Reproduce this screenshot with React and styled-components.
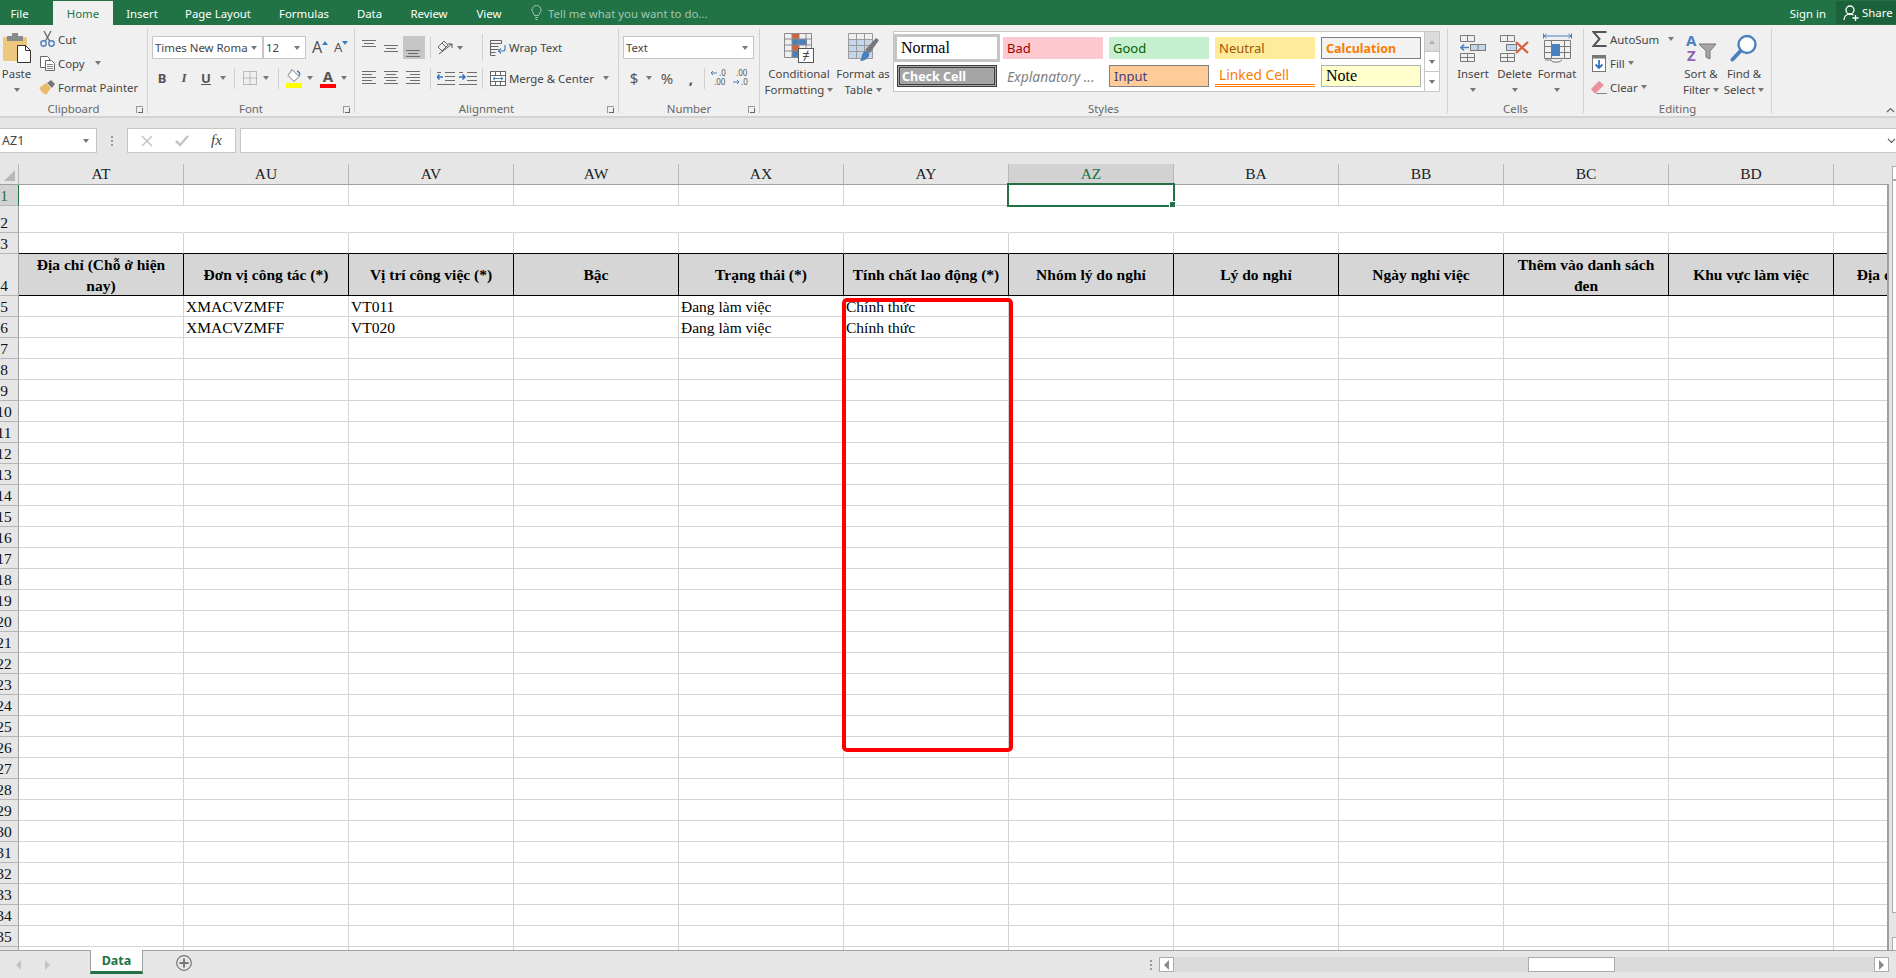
import React from 'react';
import styled, { createGlobalStyle } from 'styled-components';

const UI_FONT = '"Noto Sans", "Open Sans", sans-serif';
const CELL_FONT = '"Liberation Serif", "Times New Roman", serif';

const GlobalStyle = createGlobalStyle`
  html, body { margin: 0; height: 100%; overflow: hidden; background: #e6e6e6; }
  body { font-family: ${UI_FONT}; color: #444; }
  * { box-sizing: border-box; }
  svg { display: block; flex: none; }
`;

const Page = styled.div`
  width: 1896px;
  height: 978px;
  display: flex;
  flex-direction: column;
  overflow: hidden;
`;

/* title bar */
const TitleBar = styled.div`
  height: 25px;
  flex: none;
  background: #217346;
  padding-top: 1px;
  display: flex;
  align-items: stretch;
  color: #fff;
  font-size: 11.4px;
`;

const Tab = styled.div`
  width: ${(p) => p.$w}px;
  margin-right: ${(p) => p.$mr || 0}px;
  display: flex;
  align-items: center;
  justify-content: center;
  background: ${(p) => (p.$active ? '#f0f0f0' : 'transparent')};
  color: ${(p) => (p.$active ? '#217346' : '#fff')};
`;

const TellMe = styled.div`
  margin-left: 15px;
  display: flex;
  align-items: center;
  gap: 6px;
  color: #a3c7b3;
  flex: 1;
`;

const SignIn = styled.div`
  display: flex;
  align-items: center;
  margin-right: 10px;
`;

const ShareBox = styled.div`
  width: 60px;
  margin-bottom: 1px;
  background: #1b6139;
  display: flex;
  align-items: center;
  gap: 2px;
  padding-left: 7px;
`;

/* ribbon */
const Ribbon = styled.div`
  height: 93px;
  flex: none;
  display: flex;
  padding-top: 4px;
  background: #f0f0f0;
  border-bottom: 2px solid #d4d4d4;
  font-size: 11.4px;
  position: relative;
`;

const Group = styled.div`
  width: ${(p) => p.$w}px;
  height: 84px;
  flex: none;
  border-right: 1px solid #d2d2d2;
  display: flex;
  flex-direction: column;
`;

const GroupBody = styled.div`
  height: 74px;
  display: flex;
  padding-left: ${(p) => p.$pl || 0}px;
`;

const GroupLabel = styled.div`
  height: 10px;
  line-height: 12px;
  font-size: 11.4px;
  color: #666;
  text-align: center;
  position: relative;
`;

const Launcher = styled.span`
  position: absolute;
  right: 4px;
  top: 3px;
  width: 7px;
  height: 7px;
  border-left: 1px solid #999;
  border-top: 1px solid #999;
  &::after {
    content: '';
    position: absolute;
    right: 0;
    bottom: 0;
    width: 4px;
    height: 4px;
    border-right: 1px solid #666;
    border-bottom: 1px solid #666;
  }
`;

const BigButton = styled.div`
  width: ${(p) => p.$w}px;
  flex: none;
  padding-top: 4px;
  display: flex;
  flex-direction: column;
  align-items: center;
`;

const BigIcon = styled.div`
  height: 30px;
  margin-bottom: 3px;
  display: flex;
  align-items: center;
`;

const BigText = styled.div`
  line-height: 16px;
  height: 16px;
  white-space: nowrap;
  display: flex;
  align-items: center;
  gap: 3px;
`;

const SmallCol = styled.div`
  width: ${(p) => p.$w}px;
  flex: none;
  display: flex;
  flex-direction: column;
  gap: 4px;
  padding-left: ${(p) => p.$pl || 0}px;
`;

const SmallRow = styled.div`
  height: 20px;
  display: flex;
  align-items: center;
  white-space: nowrap;
`;

const SmallIcon = styled.span`
  width: 16px;
  margin-right: 3px;
  display: flex;
  justify-content: center;
`;

const Caret = styled.span`
  flex: none;
  display: inline-block;
  width: 0;
  height: 0;
  border-left: 3px solid transparent;
  border-right: 3px solid transparent;
  border-${(p) => (p.$up ? 'bottom' : 'top')}: 4px solid ${(p) => (p.$up ? '#b0b0b0' : '#777')};
  margin-left: ${(p) => p.$ml || 0}px;
`;

const Rows = styled.div`
  padding-top: 7px;
  display: flex;
  flex-direction: column;
  gap: 9px;
`;

const ToolRow = styled.div`
  height: ${(p) => p.$h || 20}px;
  display: flex;
  align-items: center;
  padding-left: ${(p) => p.$pl || 0}px;
`;

const Tool = styled.span`
  width: ${(p) => p.$w || 22}px;
  height: ${(p) => (p.$selected ? '23px' : 'auto')};
  margin-left: ${(p) => p.$ml || 0}px;
  flex: none;
  display: flex;
  align-items: center;
  justify-content: center;
  background: ${(p) => (p.$selected ? '#c6c6c6' : 'transparent')};
  color: #555;
  font-size: ${(p) => p.$fs || 13}px;
  font-weight: ${(p) => (p.$bold ? 700 : 400)};
  font-style: ${(p) => (p.$italic ? 'italic' : 'normal')};
  text-decoration: ${(p) => (p.$under ? 'underline' : 'none')};
  font-family: ${(p) => (p.$serif ? CELL_FONT : UI_FONT)};
`;

const CaretBox = styled.span`
  width: ${(p) => p.$w || 12}px;
  flex: none;
  display: flex;
  justify-content: center;
`;

const Sep = styled.span`
  width: 1px;
  height: ${(p) => p.$h || 21}px;
  margin-left: ${(p) => p.$ml || 0}px;
  flex: none;
  background: #cfcfcf;
`;

const Combo = styled.div`
  width: ${(p) => p.$w}px;
  height: 23px;
  flex: none;
  margin-left: ${(p) => p.$ml || 0}px;
  background: #fff;
  border: 1px solid #c6c6c6;
  display: flex;
  align-items: center;
  justify-content: space-between;
  padding: 0 5px 0 2px;
  color: #444;
  white-space: nowrap;
  overflow: hidden;
`;

const GrowA = styled.span`
  position: relative;
  width: ${(p) => p.$w}px;
  margin-left: ${(p) => p.$ml}px;
  flex: none;
  font-size: ${(p) => p.$fs}px;
  line-height: 23px;
  color: #555;
  &::after {
    content: '';
    position: absolute;
    right: 0;
    top: 5px;
    border-left: 3px solid transparent;
    border-right: 3px solid transparent;
    ${(p) => (p.$down ? 'border-top: 4px solid #3f7cbf;' : 'border-bottom: 4px solid #3f7cbf;')}
  }
`;

const ColourA = styled.span`
  width: 16px;
  display: flex;
  flex-direction: column;
  align-items: center;
  font-size: 15px;
  font-weight: 700;
  line-height: 15px;
  color: #555;
  &::after {
    content: '';
    width: 16px;
    height: 4px;
    background: ${(p) => p.$bar};
  }
`;

const ToolText = styled.span`
  margin-left: ${(p) => p.$ml || 0}px;
  white-space: nowrap;
`;

/* styles gallery */
const Gallery = styled.div`
  width: 547px;
  height: 61px;
  margin: 2px 0 0 3px;
  background: #fff;
  border: 1px solid #c6c6c6;
  display: flex;
  justify-content: space-between;
  flex: none;
`;

const StyleGrid = styled.div`
  padding: 5px 0 0 3px;
  display: grid;
  grid-template-columns: repeat(5, 100px);
  grid-auto-rows: 22px;
  gap: 6px;
`;

const styleKinds = {
  normal: 'background:#fff;color:#000;font-family:' + CELL_FONT + ';font-size:16px;box-shadow:0 0 0 3px #c6c6c6;',
  bad: 'background:#ffc7ce;color:#9c0006;',
  good: 'background:#c6efce;color:#006100;',
  neutral: 'background:#ffeb9c;color:#9c5700;',
  calc: 'background:#f2f2f2;color:#fa7d00;font-weight:700;font-size:12.5px;border:1px solid #7f7f7f;',
  check: 'background:#a5a5a5;color:#fff;font-weight:700;font-size:12.5px;border:3px double #3f3f3f;padding-left:2px;',
  explain: 'background:#fff;color:#7f7f7f;font-style:italic;font-size:13.8px;',
  input: 'background:#fc9;color:#3f3f76;border:1px solid #7f7f7f;',
  linked: 'background:#fff;color:#fa7d00;font-size:13.8px;border-bottom:3px double #ff8001;',
  note: 'background:#ffc;color:#000;border:1px solid #b2b2b2;font-family:' + CELL_FONT + ';font-size:16px;',
};

const StyleCell = styled.div`
  display: flex;
  align-items: center;
  padding-left: 4px;
  font-size: 13px;
  white-space: nowrap;
  overflow: hidden;
  ${(p) => styleKinds[p.$kind]}
`;

const GalleryScroll = styled.div`
  width: 15px;
  border-left: 1px solid #c6c6c6;
  display: flex;
  flex-direction: column;
`;

const ScrollStep = styled.div`
  flex: 1;
  display: flex;
  align-items: center;
  justify-content: center;
  background: ${(p) => (p.$off ? '#dcdcdc' : '#fff')};
  & + & { border-top: 1px solid #c6c6c6; }
`;

const ChevronUp = styled.svg`
  position: absolute;
  right: 1px;
  bottom: 3px;
`;

/* formula bar */
const FormulaBar = styled.div`
  height: 46px;
  flex: none;
  padding-top: 10px;
  display: flex;
  align-items: flex-start;
  background: #e6e6e6;
`;

const NameBox = styled.div`
  width: 97px;
  height: 25px;
  background: #fff;
  border: 1px solid #c6c6c6;
  border-left: 0;
  display: flex;
  align-items: center;
  justify-content: space-between;
  padding: 0 7px 0 2px;
  font-size: 12.5px;
`;

const Dots = styled.div`
  width: 30px;
  height: 25px;
  display: flex;
  flex-direction: column;
  align-items: center;
  justify-content: center;
  gap: 2px;
  & > i { width: 2px; height: 2px; background: #9a9a9a; }
`;

const FuncBox = styled.div`
  width: 109px;
  height: 25px;
  background: #fff;
  border: 1px solid #c6c6c6;
  display: flex;
  align-items: center;
  justify-content: space-around;
  padding: 0 2px;
`;

const Fx = styled.span`
  font-family: ${CELL_FONT};
  font-style: italic;
  font-size: 15px;
  color: #444;
`;

const FormulaInput = styled.div`
  flex: 1;
  height: 25px;
  margin-left: 4px;
  background: #fff;
  border: 1px solid #c6c6c6;
  border-right: 0;
  display: flex;
  align-items: center;
  justify-content: flex-end;
`;

/* sheet */
const SheetArea = styled.div`
  flex: 1;
  min-height: 0;
  display: flex;
  position: relative;
  background: #e6e6e6;
`;

const Grid = styled.div`
  width: 1889px;
  flex: none;
  overflow: hidden;
  font-family: ${CELL_FONT};
  font-size: 15.5px;
  color: #000;
`;

const GridBody = styled.div`
  background: #fff;
  border-right: 2px solid #9f9f9f;
  overflow: hidden;
`;

const Row = styled.div`
  height: ${(p) => p.$h}px;
  display: flex;
  width: 2100px;
`;

const Corner = styled.div`
  width: 19px;
  flex: none;
  background: #e6e6e6;
  border-right: 1px solid #b5b5b5;
  border-bottom: 1px solid #9f9f9f;
  display: flex;
  justify-content: flex-end;
  align-items: flex-end;
  padding: 0 3px 3px 0;
  &::after {
    content: '';
    border-left: 11px solid transparent;
    border-bottom: 11px solid #b9b9b9;
  }
`;

const ColHead = styled.div`
  width: 165px;
  flex: none;
  display: flex;
  align-items: center;
  justify-content: center;
  background: ${(p) => (p.$active ? '#d2d2d2' : '#e6e6e6')};
  color: ${(p) => (p.$active ? '#217346' : '#222')};
  border-right: 1px solid #b9b9b9;
  border-bottom: 1px solid #9f9f9f;
`;

const RowHead = styled.div`
  width: 19px;
  flex: none;
  overflow: hidden;
  display: flex;
  align-items: flex-end;
  background: ${(p) => (p.$active ? '#d2d2d2' : '#e6e6e6')};
  color: ${(p) => (p.$active ? '#217346' : '#111')};
  border-right: 1px solid ${(p) => (p.$active ? '#217346' : '#9f9f9f')};
  border-bottom: 1px solid #b5b5b5;
  line-height: 18px;
`;

const RowNumber = styled.span`
  width: 8px;
  display: flex;
  justify-content: center;
`;

const Cell = styled.div`
  width: 165px;
  flex: none;
  display: flex;
  align-items: flex-end;
  padding-left: 2px;
  line-height: 18px;
  white-space: nowrap;
  border-right: 1px solid ${(p) => (p.$merged ? 'transparent' : '#d4d4d4')};
  border-bottom: 1px solid ${(p) => (p.$dark ? '#000' : '#d4d4d4')};
`;

const HeadCell = styled.div`
  width: 165px;
  flex: none;
  display: flex;
  align-items: center;
  justify-content: center;
  text-align: center;
  line-height: 21px;
  font-weight: 700;
  background: #d6d6d6;
  padding: 0 8px;
  border-right: 1px solid #000;
  border-bottom: 1px solid #000;
`;

const CellSelection = styled.div`
  position: absolute;
  left: 1007px;
  top: 19px;
  width: 168px;
  height: 24px;
  border: 2px solid #217346;
  &::after {
    content: '';
    position: absolute;
    right: -3px;
    bottom: -3px;
    width: 5px;
    height: 5px;
    background: #217346;
    border: 1px solid #fff;
  }
`;

const RedBox = styled.div`
  position: absolute;
  left: 842px;
  top: 134px;
  width: 171px;
  height: 454px;
  border: 4px solid #ff0000;
  border-radius: 5px;
  pointer-events: none;
`;

const VScroll = styled.div`
  flex: 1;
  padding: 2px 0 0 3px;
  display: flex;
  flex-direction: column;
`;

const VPiece = styled.div`
  height: ${(p) => p.$h}px;
  margin-top: ${(p) => p.$mt || 0}px;
  background: #fff;
  border-left: 1px solid #ababab;
  border-top: 1px solid #ababab;
  border-bottom: 1px solid #ababab;
  flex: none;
`;

/* sheet tabs */
const TabBar = styled.div`
  height: 28px;
  flex: none;
  background: #e6e6e6;
  border-top: 1px solid #a0a0a0;
  display: flex;
  position: relative;
`;

const NavArrows = styled.div`
  width: 90px;
  display: flex;
  align-items: center;
  justify-content: flex-start;
  gap: 24px;
  padding: 0 0 0 16px;
`;

const NavArrow = styled.span`
  border-top: 5px solid transparent;
  border-bottom: 5px solid transparent;
  ${(p) => (p.$right ? `border-left: 5px solid ${p.$dark ? '#8a8a8a' : '#c4c4c4'};` : `border-right: 5px solid ${p.$dark ? '#8a8a8a' : '#c4c4c4'};`)}
`;

const SheetTab = styled.div`
  width: 53px;
  height: 24px;
  margin-top: -1px;
  background: #fff;
  border-left: 1px solid #a0a0a0;
  border-right: 1px solid #a0a0a0;
  border-bottom: 3px solid #217346;
  color: #217346;
  font-size: 12.5px;
  font-weight: 700;
  display: flex;
  align-items: center;
  justify-content: center;
`;

const AddSheet = styled.div`
  margin: 4px 0 0 33px;
`;

const ScrollZone = styled.div`
  margin-left: auto;
  padding: 6px 7px 0 0;
  display: flex;
`;

const ZoneDots = styled(Dots)`
  width: 16px;
  height: 15px;
`;

const HTrack = styled.div`
  width: 730px;
  height: 15px;
  background: #dadada;
  display: flex;
  align-items: stretch;
  justify-content: space-between;
  position: relative;
`;

const HButton = styled.div`
  width: 15px;
  background: #fff;
  border: 1px solid #ababab;
  display: flex;
  align-items: center;
  justify-content: center;
`;

const HThumb = styled.div`
  position: absolute;
  left: 369px;
  top: 0;
  width: 87px;
  height: 15px;
  background: #fff;
  border: 1px solid #ababab;
`;

/* icons */
const G = '#7a7a7a';
const B = '#4a80bd';

const Bulb = () => (
  <svg width="11" height="16" viewBox="0 0 11 16" fill="none" stroke="#a3c7b3" strokeWidth="1">
    <path d="M3.500 10.500C3 8.500 1 7.500 1 5a4.500 4.500 0 0 1 9 0c0 2.500-2 3.500-2.500 5.500z" />
    <path d="M4 12.500h3M4.500 14.500h2" />
  </svg>
);

const Person = () => (
  <svg width="17" height="18" viewBox="0 0 17 18" fill="none" stroke="#fff" strokeWidth="1.300">
    <circle cx="7" cy="6" r="4" />
    <path d="M1 16c0-3.500 2.500-6 6-6 1.500 0 2.500.5 3.500 1M12.500 11v6M9.500 14h6" />
  </svg>
);

const PasteIcon = () => (
  <svg width="28" height="30" viewBox="0 0 28 30">
    <rect x="0" y="4" width="24" height="24" rx="1" fill="#edc77d" />
    <path d="M4 3h5V0h6v3h5v5H4z" fill="#8a8a8a" />
    <path d="M14.500 12.500h8l5 5v12h-13z" fill="#fff" stroke="#333" />
    <path d="M22.500 12.500v5h5" fill="none" stroke="#333" />
  </svg>
);

const CutIcon = () => (
  <svg width="15" height="16" viewBox="0 0 15 16" fill="none">
    <path d="M4 0l5.500 10M11 0L5.500 10" stroke="#666" strokeWidth="1.300" />
    <circle cx="3.500" cy="12.500" r="2.700" stroke={B} strokeWidth="1.400" />
    <circle cx="11.500" cy="12.500" r="2.700" stroke={B} strokeWidth="1.400" />
  </svg>
);

const CopyIcon = () => (
  <svg width="15" height="15" viewBox="0 0 15 15" fill="#fff" stroke="#666">
    <path d="M.5.500h7l2 2v9h-9z" />
    <path d="M5.500 4.500h6l3 3v7h-9z" />
    <path d="M7 8.500h6M7 10.500h6M7 12.500h6" strokeWidth=".8" />
  </svg>
);

const PainterIcon = () => (
  <svg width="17" height="15" viewBox="0 0 17 15">
    <path d="M0 8l7-5 5 5-5 7-2-2-1 1-1-3-2 1 1-2z" fill="#e7b96a" />
    <path d="M8 3l4-3 4 4-3 4z" fill="#777" />
  </svg>
);

const BorderIcon = () => (
  <svg width="14" height="14" viewBox="0 0 14 14" fill="none" stroke="#8a8a8a" strokeDasharray="1 1">
    <path d="M.5.500h13v13H.5zM7 .5v13M.5 7h13" />
  </svg>
);

const BucketIcon = () => (
  <svg width="17" height="20" viewBox="0 0 17 20">
    <path d="M6 1.500l7 7-5 5-6-6z" fill="#fff" stroke="#777" />
    <path d="M13 8c1.500-2 .5-4-2-5" fill="none" stroke={B} strokeWidth="1.500" />
    <rect x="0" y="15" width="16" height="5" fill="#ffff00" />
  </svg>
);

const LinesIcon = ({ lines }) => (
  <svg width="16" height="20" viewBox="0 0 16 20" stroke="#6e6e6e">
    {lines.map(([x1, x2, y]) => (
      <line key={y} x1={x1} x2={x2} y1={y + 0.5} y2={y + 0.5} />
    ))}
  </svg>
);

const OrientIcon = () => (
  <svg width="17" height="17" viewBox="0 0 17 17" fill="none" stroke="#666">
    <path d="M1 8l6-6 4 4-6 6zM5 4l4 4" />
    <path d="M2 15L15 5" stroke="#555" />
    <path d="M11 5h4v4" stroke="#555" />
  </svg>
);

const WrapIcon = () => (
  <svg width="16" height="16" viewBox="0 0 16 16" fill="none">
    <path d="M.5.500h11v3H.5zM.5 6.500h8M.5 9.500h8M.5 12.500h5M.5 15.500h5" stroke="#666" />
    <path d="M.5.500v15" stroke="#666" />
    <path d="M15 5v4c0 1.500-1 2-2 2H9" stroke={B} strokeWidth="1.200" fill="none" />
    <path d="M11 8.500L8.500 11l2.500 2.500" stroke={B} strokeWidth="1.200" fill="none" />
  </svg>
);

const MergeIcon = () => (
  <svg width="16" height="15" viewBox="0 0 16 15" fill="#fff" stroke="#666">
    <rect x=".5" y=".5" width="15" height="14" />
    <path d="M.5 4.500h15M.5 10.500h15M5.500.500v4M10.500.500v4M5.500 10.500v4M10.500 10.500v4" />
    <path d="M3 7.500h10M5 5.800L3 7.500l2 1.700M11 5.800l2 1.700-2 1.700" stroke={B} fill="none" />
  </svg>
);

const IndentIcon = ({ inc }) => (
  <svg width="18" height="15" viewBox="0 0 18 15" stroke="#6e6e6e" fill="none">
    <path d="M8 1.500h10M8 5.500h10M8 9.500h10M0 13.500h18M0 1.500h4" />
    <path d={inc ? 'M0 6h6M3.500 3.500L6 6 3.500 8.500' : 'M6 6H0M2.500 3.500L0 6l2.500 2.500'} stroke="#2f74bd" strokeWidth="1.500" />
  </svg>
);

const DecimalIcon = ({ inc }) => (
  <svg width="16" height="18" viewBox="0 0 16 18" fontFamily={UI_FONT} fontSize="8" fill="#555">
    {inc ? (
      <>
        <text x="3" y="7">.00</text>
        <text x="8" y="16">.0</text>
        <path d="M0 13h6M4 11l2 2-2 2" stroke={B} fill="none" />
      </>
    ) : (
      <>
        <text x="8" y="7">.0</text>
        <text x="3" y="16">.00</text>
        <path d="M6 4H0M2 2L0 4l2 2" stroke={B} fill="none" />
      </>
    )}
  </svg>
);

const CondIcon = () => (
  <svg width="30" height="30" viewBox="0 0 30 30">
    <rect x="8" y="0" width="7" height="6" fill="#d9603b" />
    <rect x="8" y="6" width="15" height="6" fill={B} />
    <rect x="8" y="12" width="7" height="6" fill="#d9603b" />
    <rect x="8" y="18" width="7" height="6" fill={B} />
    <path d="M.5.500h27v24H.5zM8 .5v24M15 .5v24M22 .5v24M.5 6h27M.5 12h27M.5 18h27" fill="none" stroke="#8a8a8a" />
    <rect x="14.500" y="15.500" width="15" height="14" fill="#fff" stroke="#555" />
    <text x="22" y="27" textAnchor="middle" fontSize="13" fill="#444" fontFamily={UI_FONT}>≠</text>
  </svg>
);

const TableIcon = () => (
  <svg width="31" height="30" viewBox="0 0 31 30">
    <rect x="1" y="7" width="24" height="18" fill="#c5d6ea" />
    <path d="M.5.500h24v25H.5zM8.500.500v25M16.500.500v25M.5 6.500h24M.5 12.500h24M.5 18.500h24" fill="none" stroke="#9a9a9a" />
    <path d="M17 17L28 5l3 2-9 13z" fill="#777" />
    <path d="M17 18c3 0 5 2 4 5-2 4-6 5-9 5 2-2 1-8 5-10z" fill={B} />
  </svg>
);

const InsertIcon = () => (
  <svg width="26" height="27" viewBox="0 0 26 27" fill="none" stroke="#7a7a7a">
    <path d="M.5.500h14v6H.5zM7.500.500v6M.5 18.500h14v8H.5zM.5 22.500h14M7.500 18.500v8" />
    <rect x="10.500" y="9.500" width="15" height="6" fill="#c5d6ea" />
    <path d="M18 9.500v6" />
    <path d="M9 12.500H1M4 9.500l-3 3 3 3" stroke={B} strokeWidth="1.600" />
  </svg>
);

const DeleteIcon = () => (
  <svg width="30" height="27" viewBox="0 0 30 27" fill="none" stroke={G}>
    <path d="M.5.500h14v6H.5zM7.500.500v6M.5 18.500h14v8H.5zM.5 22.500h14M7.500 18.500v8" />
    <rect x="6.500" y="9.500" width="10" height="6" fill="#c5d6ea" />
    <path d="M16 7l12 11M28 7L16 18" stroke="#d9603b" strokeWidth="2.200" />
  </svg>
);

const FormatIcon = () => (
  <svg width="29" height="30" viewBox="0 0 29 30" fill="none">
    <path d="M1 3h27M3.500 1l-2.500 2 2.500 2M25.500 1l2.500 2-2.500 2M.5.500v5M28.500.500v5" stroke={B} />
    <path d="M1.500 7.500h26v18h-26zM8.500 7.500v18M21.500 7.500v18M1.500 13.500h26M1.500 19.500h26" stroke={G} />
    <rect x="9" y="11" width="8" height="12" fill={B} />
    <path d="M2 27h6l2 2h6l3-2" stroke={G} />
  </svg>
);

const SigmaIcon = () => (
  <svg width="15" height="16" viewBox="0 0 15 16" fill="none" stroke="#555" strokeWidth="2">
    <path d="M14.500 1H1.500l6 7-6 7h13" />
  </svg>
);

const FillIcon = () => (
  <svg width="14" height="17" viewBox="0 0 14 17" fill="#fff" stroke="#777">
    <rect x=".5" y=".5" width="13" height="16" />
    <rect x="0" y="0" width="14" height="3" fill="#777" />
    <path d="M7 5v8M3.500 9.500L7 13l3.500-3.500" fill="none" stroke="#2f74bd" strokeWidth="1.800" />
  </svg>
);

const EraserIcon = () => (
  <svg width="16" height="13" viewBox="0 0 16 13">
    <path d="M0 8l8-8 5 4-8 8H3z" fill="#ee8fa0" />
    <path d="M5 12.500h11" stroke="#888" />
  </svg>
);

const SortIcon = () => (
  <svg width="31" height="28" viewBox="0 0 31 28" fontFamily={UI_FONT} fontWeight="700" fontSize="15">
    <text x="0" y="12" fill={B}>A</text>
    <text x="1" y="27" fill="#8e62b3">Z</text>
    <path d="M13 10h17l-6 7v8l-4-2v-6z" fill="#a6a6a6" stroke="#777" />
  </svg>
);

const FindIcon = () => (
  <svg width="28" height="28" viewBox="0 0 28 28" fill="none">
    <circle cx="17" cy="10.500" r="8.500" stroke={B} strokeWidth="2.400" fill="#fff" />
    <path d="M10.500 17L2.500 25.500" stroke={B} strokeWidth="4" strokeLinecap="round" />
  </svg>
);

const CrossIcon = () => (
  <svg width="12" height="12" viewBox="0 0 12 12" stroke="#c4c4c4" strokeWidth="1.500">
    <path d="M1 1l10 10M11 1L1 11" />
  </svg>
);

const CheckIcon = () => (
  <svg width="14" height="12" viewBox="0 0 14 12" fill="none" stroke="#c4c4c4" strokeWidth="2.500">
    <path d="M1 6l4 4 8-9" />
  </svg>
);

const PlusCircle = () => (
  <svg width="16" height="16" viewBox="0 0 16 16" fill="none" stroke="#777">
    <circle cx="8" cy="8" r="7.300" strokeWidth="1.200" />
    <path d="M8 3.500v9M3.500 8h9" strokeWidth="2" />
  </svg>
);

const SmallChevron = () => (
  <svg width="9" height="6" viewBox="0 0 9 6" fill="none" stroke="#666" strokeWidth="1.200">
    <path d="M1 1l3.500 3.500L8 1" />
  </svg>
);

/* data */
const columns = ['AT', 'AU', 'AV', 'AW', 'AX', 'AY', 'AZ', 'BA', 'BB', 'BC', 'BD', 'BE'];

const headings = [
  'Địa chỉ (Chỗ ở hiện nay)',
  'Đơn vị công tác (*)',
  'Vị trí công việc (*)',
  'Bậc',
  'Trạng thái (*)',
  'Tính chất lao động (*)',
  'Nhóm lý do nghỉ',
  'Lý do nghỉ',
  'Ngày nghỉ việc',
  'Thêm vào danh sách đen',
  'Khu vực làm việc',
  'Địa điểm làm việc',
];

const rowData = {
  5: ['', 'XMACVZMFF', 'VT011', '', 'Đang làm việc', 'Chính thức'],
  6: ['', 'XMACVZMFF', 'VT020', '', 'Đang làm việc', 'Chính thức'],
};

const rowNumbers = Array.from({ length: 36 }, (_, i) => i + 1);
const rowHeight = (n) => (n === 2 ? 27 : n === 4 ? 42 : 21);

const gallery = [
  ['normal', 'Normal'],
  ['bad', 'Bad'],
  ['good', 'Good'],
  ['neutral', 'Neutral'],
  ['calc', 'Calculation'],
  ['check', 'Check Cell'],
  ['explain', 'Explanatory ...'],
  ['input', 'Input'],
  ['linked', 'Linked Cell'],
  ['note', 'Note'],
];

const lineSets = {
  top: [[0, 14, 2], [2, 12, 5], [0, 14, 8]],
  middle: [[0, 14, 7], [2, 12, 10], [0, 14, 13]],
  bottom: [[0, 14, 12], [2, 12, 15], [0, 14, 18]],
  left: [[0, 14, 3], [0, 10, 6], [0, 14, 9], [0, 10, 12], [0, 14, 15]],
  center: [[0, 14, 3], [2, 12, 6], [0, 14, 9], [2, 12, 12], [0, 14, 15]],
  right: [[0, 14, 3], [4, 14, 6], [0, 14, 9], [4, 14, 12], [0, 14, 15]],
};

function SheetRow({ n }) {
  return (
    <Row $h={rowHeight(n)}>
      <RowHead $active={n === 1}>
        <RowNumber>{n}</RowNumber>
      </RowHead>
      {columns.map((col, i) =>
        n === 4 ? (
          <HeadCell key={col}>{headings[i]}</HeadCell>
        ) : (
          <Cell key={col} $merged={n === 2} $dark={n === 3}>
            {rowData[n] ? rowData[n][i] : ''}
          </Cell>
        )
      )}
    </Row>
  );
}

export default function App() {
  return (
    <Page>
      <GlobalStyle />
      <TitleBar>
        <Tab $w={39} $mr={14}>File</Tab>
        <Tab $w={60} $active>Home</Tab>
        <Tab $w={58}>Insert</Tab>
        <Tab $w={94}>Page Layout</Tab>
        <Tab $w={78}>Formulas</Tab>
        <Tab $w={53}>Data</Tab>
        <Tab $w={66}>Review</Tab>
        <Tab $w={54}>View</Tab>
        <TellMe>
          <Bulb />
          Tell me what you want to do...
        </TellMe>
        <SignIn>Sign in</SignIn>
        <ShareBox>
          <Person />
          Share
        </ShareBox>
      </TitleBar>

      <Ribbon>
        <Group $w={148}>
          <GroupBody>
            <BigButton $w={33}>
              <BigIcon><PasteIcon /></BigIcon>
              <BigText>Paste</BigText>
              <BigText><Caret /></BigText>
            </BigButton>
            <SmallCol $w={110} $pl={6}>
              <SmallRow><SmallIcon><CutIcon /></SmallIcon>Cut</SmallRow>
              <SmallRow><SmallIcon><CopyIcon /></SmallIcon>Copy<Caret $ml={10} /></SmallRow>
              <SmallRow><SmallIcon><PainterIcon /></SmallIcon>Format Painter</SmallRow>
            </SmallCol>
          </GroupBody>
          <GroupLabel>Clipboard<Launcher /></GroupLabel>
        </Group>

        <Group $w={207}>
          <GroupBody>
            <Rows>
              <ToolRow $h={23} $pl={4}>
                <Combo $w={111}>Times New Roma<Caret /></Combo>
                <Combo $w={43}>12<Caret /></Combo>
                <GrowA $w={16} $ml={6} $fs={16}>A</GrowA>
                <GrowA $w={14} $ml={6} $fs={13} $down>A</GrowA>
              </ToolRow>
              <ToolRow $pl={3}>
                <Tool $bold>B</Tool>
                <Tool $italic $serif $bold>I</Tool>
                <Tool $bold $under>U</Tool>
                <CaretBox><Caret /></CaretBox>
                <Sep $ml={5} />
                <Tool $w={19} $ml={5}><BorderIcon /></Tool>
                <CaretBox $w={13}><Caret /></CaretBox>
                <Sep $ml={6} />
                <Tool $w={20} $ml={5}><BucketIcon /></Tool>
                <CaretBox $w={11}><Caret /></CaretBox>
                <Tool $ml={2}><ColourA $bar="#ff0000">A</ColourA></Tool>
                <CaretBox $w={10}><Caret /></CaretBox>
              </ToolRow>
            </Rows>
          </GroupBody>
          <GroupLabel>Font<Launcher /></GroupLabel>
        </Group>

        <Group $w={264}>
          <GroupBody>
            <Rows>
              <ToolRow $h={23} $pl={4}>
                <Tool><LinesIcon lines={lineSets.top} /></Tool>
                <Tool><LinesIcon lines={lineSets.middle} /></Tool>
                <Tool $selected><LinesIcon lines={lineSets.bottom} /></Tool>
                <Sep $ml={5} />
                <Tool $w={20} $ml={4}><OrientIcon /></Tool>
                <CaretBox $w={10}><Caret /></CaretBox>
                <Sep $ml={17} $h={27} />
                <Tool $w={16} $ml={7}><WrapIcon /></Tool>
                <ToolText $ml={3}>Wrap Text</ToolText>
              </ToolRow>
              <ToolRow $pl={4}>
                <Tool><LinesIcon lines={lineSets.left} /></Tool>
                <Tool><LinesIcon lines={lineSets.center} /></Tool>
                <Tool><LinesIcon lines={lineSets.right} /></Tool>
                <Sep $ml={5} />
                <Tool $ml={4}><IndentIcon /></Tool>
                <Tool><IndentIcon inc /></Tool>
                <Sep $ml={3} />
                <Tool $w={16} $ml={7}><MergeIcon /></Tool>
                <ToolText $ml={3}>Merge &amp; Center</ToolText>
                <Caret $ml={9} />
              </ToolRow>
            </Rows>
          </GroupBody>
          <GroupLabel>Alignment<Launcher /></GroupLabel>
        </Group>

        <Group $w={141}>
          <GroupBody>
            <Rows>
              <ToolRow $h={23} $pl={4}>
                <Combo $w={131}>Text<Caret /></Combo>
              </ToolRow>
              <ToolRow $pl={6}>
                <Tool $w={18} $fs={15}>$</Tool>
                <CaretBox><Caret /></CaretBox>
                <Tool $w={20} $ml={2} $fs={15}>%</Tool>
                <Tool $w={20} $ml={4} $fs={15} $bold>,</Tool>
                <Sep $ml={3} />
                <Tool $w={20} $ml={4}><DecimalIcon /></Tool>
                <Tool $w={20} $ml={2}><DecimalIcon inc /></Tool>
              </ToolRow>
            </Rows>
          </GroupBody>
          <GroupLabel>Number<Launcher /></GroupLabel>
        </Group>

        <Group $w={688}>
          <GroupBody $pl={2}>
            <BigButton $w={74}>
              <BigIcon><CondIcon /></BigIcon>
              <BigText>Conditional</BigText>
              <BigText>Formatting<Caret /></BigText>
            </BigButton>
            <BigButton $w={54}>
              <BigIcon><TableIcon /></BigIcon>
              <BigText>Format as</BigText>
              <BigText>Table<Caret /></BigText>
            </BigButton>
            <Gallery>
              <StyleGrid>
                {gallery.map(([kind, label]) => (
                  <StyleCell key={kind} $kind={kind}>{label}</StyleCell>
                ))}
              </StyleGrid>
              <GalleryScroll>
                <ScrollStep $off><Caret $up /></ScrollStep>
                <ScrollStep><Caret /></ScrollStep>
                <ScrollStep><Caret /></ScrollStep>
              </GalleryScroll>
            </Gallery>
          </GroupBody>
          <GroupLabel>Styles</GroupLabel>
        </Group>

        <Group $w={136}>
          <GroupBody $pl={5}>
            <BigButton $w={40}>
              <BigIcon><InsertIcon /></BigIcon>
              <BigText>Insert</BigText>
              <BigText><Caret /></BigText>
            </BigButton>
            <BigButton $w={43}>
              <BigIcon><DeleteIcon /></BigIcon>
              <BigText>Delete</BigText>
              <BigText><Caret /></BigText>
            </BigButton>
            <BigButton $w={42}>
              <BigIcon><FormatIcon /></BigIcon>
              <BigText>Format</BigText>
              <BigText><Caret /></BigText>
            </BigButton>
          </GroupBody>
          <GroupLabel>Cells</GroupLabel>
        </Group>

        <Group $w={188}>
          <GroupBody>
            <SmallCol $w={97} $pl={7}>
              <SmallRow><SmallIcon><SigmaIcon /></SmallIcon>AutoSum<Caret $ml={9} /></SmallRow>
              <SmallRow><SmallIcon><FillIcon /></SmallIcon>Fill<Caret $ml={3} /></SmallRow>
              <SmallRow><SmallIcon><EraserIcon /></SmallIcon>Clear<Caret $ml={3} /></SmallRow>
            </SmallCol>
            <BigButton $w={40}>
              <BigIcon><SortIcon /></BigIcon>
              <BigText>Sort &amp;</BigText>
              <BigText>Filter<Caret /></BigText>
            </BigButton>
            <BigButton $w={46}>
              <BigIcon><FindIcon /></BigIcon>
              <BigText>Find &amp;</BigText>
              <BigText>Select<Caret /></BigText>
            </BigButton>
          </GroupBody>
          <GroupLabel>Editing</GroupLabel>
        </Group>

        <ChevronUp width="9" height="6" viewBox="0 0 9 6" fill="none" stroke="#666" strokeWidth="1.200">
          <path d="M1 5l3.500-3.500L8 5" />
        </ChevronUp>
      </Ribbon>

      <FormulaBar>
        <NameBox>AZ1<Caret /></NameBox>
        <Dots><i /><i /><i /></Dots>
        <FuncBox>
          <CrossIcon />
          <CheckIcon />
          <Fx>fx</Fx>
        </FuncBox>
        <FormulaInput>
          <SmallChevron />
        </FormulaInput>
      </FormulaBar>

      <SheetArea>
        <Grid>
          <Row $h={21}>
            <Corner />
            {columns.map((col) => (
              <ColHead key={col} $active={col === 'AZ'}>{col}</ColHead>
            ))}
          </Row>
          <GridBody>
            {rowNumbers.map((n) => (
              <SheetRow key={n} n={n} />
            ))}
          </GridBody>
        </Grid>
        <VScroll>
          <VPiece $h={14} />
          <VPiece $h={733} />
          <VPiece $h={14} $mt={24} />
        </VScroll>
        <CellSelection />
        <RedBox />
      </SheetArea>

      <TabBar>
        <NavArrows>
          <NavArrow />
          <NavArrow $right />
        </NavArrows>
        <SheetTab>Data</SheetTab>
        <AddSheet><PlusCircle /></AddSheet>
        <ScrollZone>
          <ZoneDots><i /><i /><i /></ZoneDots>
          <HTrack>
            <HButton><NavArrow $dark /></HButton>
            <HThumb />
            <HButton><NavArrow $right $dark /></HButton>
          </HTrack>
        </ScrollZone>
      </TabBar>
    </Page>
  );
}
